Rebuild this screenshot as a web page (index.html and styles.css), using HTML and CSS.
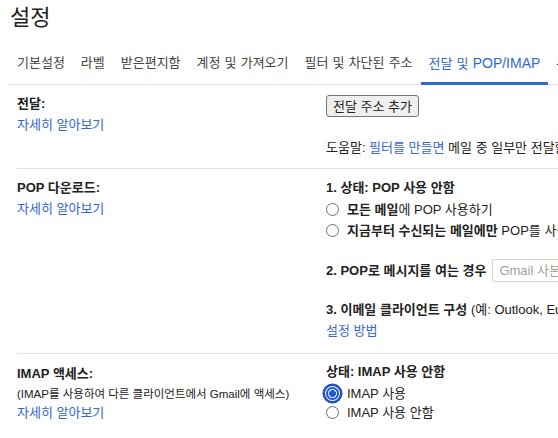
FILE: index.html
```html
<!DOCTYPE html>
<html lang="ko">
<head>
<meta charset="utf-8">
<title>설정</title>
<link rel="stylesheet" href="styles.css">
</head>
<body>
<div class="page">
  <h1 class="title">설정</h1>
  <nav class="tabs">
    <a class="tab">기본설정</a>
    <a class="tab">라벨</a>
    <a class="tab">받은편지함</a>
    <a class="tab">계정 및 가져오기</a>
    <a class="tab">필터 및 차단된 주소</a>
    <a class="tab active">전달 및 <span class="latin">POP/IMAP</span></a>
    <a class="tab">부가기능</a>
    <a class="tab">채팅 및 Meet</a>
  </nav>

  <section class="row">
    <div class="label">
      <div class="label-title">전달:</div>
      <a class="link">자세히 알아보기</a>
    </div>
    <div class="content">
      <button class="btn">전달 주소 추가</button>
      <p class="help">도움말: <a class="link">필터를 만들면</a> 메일 중 일부만 전달할 수 있습니다.</p>
    </div>
  </section>

  <section class="row row-pop">
    <div class="label">
      <div class="label-title">POP 다운로드:</div>
      <a class="link">자세히 알아보기</a>
    </div>
    <div class="content">
      <div class="heading">1. 상태: POP 사용 안함</div>
      <label class="radio-line"><span class="radio"></span><span><b>모든 메일</b>에 POP 사용하기</span></label>
      <label class="radio-line"><span class="radio"></span><span><b>지금부터 수신되는 메일에만</b> POP를 사용하기</span></label>
      <div class="select-line">
        <b>2. POP로 메시지를 여는 경우</b>
        <span class="select">Gmail 사본을 받은편지함에 보관하기</span>
      </div>
      <div class="step3"><b>3. 이메일 클라이언트 구성</b> (예: Outlook, Eudora, Netscape Mail)</div>
      <a class="link">설정 방법</a>
    </div>
  </section>

  <section class="row row-imap">
    <div class="label">
      <div class="label-title">IMAP 액세스:</div>
      <div class="sub">(IMAP를 사용하여 다른 클라이언트에서 Gmail에 액세스)</div>
      <a class="link">자세히 알아보기</a>
    </div>
    <div class="content content-imap">
      <div class="heading">상태: IMAP 사용 안함</div>
      <label class="radio-line small"><span class="radio checked"></span><span>IMAP 사용</span></label>
      <label class="radio-line small"><span class="radio"></span><span>IMAP 사용 안함</span></label>
    </div>
  </section>
</div>
</body>
</html>
```

FILE: styles.css
```css
html, body {
  margin: 0;
  padding: 0;
  background: #fff;
  overflow: hidden;
}
body {
  font-family: "Liberation Sans", "Noto Sans CJK KR", sans-serif;
  font-size: 13px;
  color: #222;
}
.page {
  width: 900px;
  padding-left: 9px;
}
.title {
  margin: 0;
  padding: 4px 0 0 1px;
  font-size: 22px;
  line-height: 28px;
  font-weight: normal;
  color: #222;
}
.tabs {
  display: flex;
  border-bottom: 1px solid #e3e3e3;
  white-space: nowrap;
}
.tab {
  padding: 21px 8px 8px;
  line-height: 20px;
  font-size: 13px;
  word-spacing: 0.5px;
  color: #444;
  border-bottom: 3px solid transparent;
  margin-bottom: -1px;
}
.tab.active {
  color: #3367d6;
  border-bottom-color: #3367d6;
}
.latin { font-size: 14px; }
.row {
  margin-left: 8px;
  display: grid;
  grid-template-columns: 309px 1fr;
  padding: 8px 0 10px;
  border-bottom: 1px solid #e3e3e3;
  line-height: 21px;
}
.row-pop { padding-bottom: 12px; }
.row-imap { border-bottom: none; padding-top: 9px; }
.label {
  display: flex;
  flex-direction: column;
  align-items: flex-start;
}
.label-title { font-weight: bold; }
.link { color: #3367d6; text-decoration: none; }
.sub {
  font-size: 11.5px;
  line-height: 15px;
  margin-top: 3px;
  white-space: nowrap;
}
.content {
  display: flex;
  flex-direction: column;
  align-items: flex-start;
  white-space: nowrap;
}
.content-imap { margin-top: -2px; }
.btn {
  margin-top: 2px;
  height: 22px;
  padding: 0 6px;
  font: inherit;
  font-size: 13px;
  color: #222;
  background: #efefef;
  border: 1px solid #767676;
  border-radius: 3px;
}
.help { margin: 20px 0 0; }
.heading { font-weight: bold; margin-bottom: 1px; }
.content-imap .heading { margin-bottom: 2px; }
.radio-line {
  display: flex;
  align-items: center;
  gap: 8px;
}
.radio-line.small { line-height: 19px; }
.radio {
  width: 13px;
  height: 13px;
  box-sizing: border-box;
  border: 1px solid #6b6b6b;
  border-radius: 50%;
  background: #fff;
  flex: none;
}
.radio.checked {
  border: 2px solid #1f5ad6;
  background: radial-gradient(circle, #1f5ad6 0 3.2px, #fff 3.7px);
  box-shadow: 0 0 0 1px #fff, 0 0 0 3.5px #1f4fc4;
}
.select-line {
  margin-top: 18px;
  display: flex;
  align-items: center;
  gap: 6px;
  height: 23px;
}
.select {
  height: 23px;
  box-sizing: border-box;
  border: 1px solid #d4d4d4;
  border-radius: 2px;
  padding: 0 6px;
  line-height: 21px;
  color: #a0a0a0;
  font-size: 13px;
}
.step3 { margin-top: 17px; }
```
